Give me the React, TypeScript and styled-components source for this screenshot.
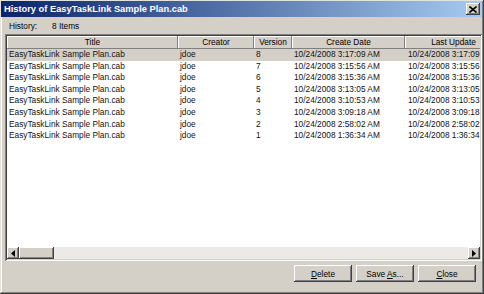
import React from "react";
import styled, { createGlobalStyle } from "styled-components";

type Revision = {
  version: number;
  created: string;
  updated: string;
};

const fileName = "EasyTaskLink Sample Plan.cab";

const revisions: Revision[] = [
  { version: 8, created: "10/24/2008 3:17:09 AM", updated: "10/24/2008 3:17:09 AM" },
  { version: 7, created: "10/24/2008 3:15:56 AM", updated: "10/24/2008 3:15:56 AM" },
  { version: 6, created: "10/24/2008 3:15:36 AM", updated: "10/24/2008 3:15:36 AM" },
  { version: 5, created: "10/24/2008 3:13:05 AM", updated: "10/24/2008 3:13:05 AM" },
  { version: 4, created: "10/24/2008 3:10:53 AM", updated: "10/24/2008 3:10:53 AM" },
  { version: 3, created: "10/24/2008 3:09:18 AM", updated: "10/24/2008 3:09:18 AM" },
  { version: 2, created: "10/24/2008 2:58:02 AM", updated: "10/24/2008 2:58:02 AM" },
  { version: 1, created: "10/24/2008 1:36:34 AM", updated: "10/24/2008 1:36:34 AM" }
];

const columns = ["Title", "Creator", "Version", "Create Date", "Last Update"];

// the last column runs past the visible area, like the real list view
const COLS = "171px 76px 38px 113px 97px 160px";

export default function App() {
  const [selected, setSelected] = React.useState(8);
  return (
    <>
      <GlobalStyle />
      <Window>
        <TitleBar>
          <TitleText>History of {fileName}</TitleText>
          <CloseBox aria-label="Close">
            <svg width="8" height="7" viewBox="0 0 8 7">
              <path d="M0.5 0.5 L7.5 6.5 M7.5 0.5 L0.5 6.5" stroke="#000" strokeWidth="1.6" />
            </svg>
          </CloseBox>
        </TitleBar>
        <Body>
          <InfoRow>
            <InfoLabel>History:</InfoLabel>
            <span>{revisions.length} Items</span>
          </InfoRow>
          <ListBox>
            <Viewport>
              <Grid>
                {columns.map((label) => (
                  <HeaderCell key={label}>{label}</HeaderCell>
                ))}
                <HeaderCell />
                {revisions.map((r) => (
                  <Row
                    key={r.version}
                    $selected={r.version === selected}
                    onClick={() => setSelected(r.version)}
                  >
                    <Cell>{fileName}</Cell>
                    <Cell>jdoe</Cell>
                    <Cell>{r.version}</Cell>
                    <Cell>{r.created}</Cell>
                    <Cell $pad={3}>{r.updated}</Cell>
                    <Cell />
                  </Row>
                ))}
              </Grid>
            </Viewport>
            <HScroll>
              <ArrowButton>
                <svg width="4" height="7" viewBox="0 0 4 7">
                  <path d="M4 0 L0 3.5 L4 7 Z" fill="#000" />
                </svg>
              </ArrowButton>
              <Thumb />
              <Track />
              <ArrowButton>
                <svg width="4" height="7" viewBox="0 0 4 7">
                  <path d="M0 0 L4 3.5 L0 7 Z" fill="#000" />
                </svg>
              </ArrowButton>
            </HScroll>
          </ListBox>
          <ButtonRow>
            <Button>
              <span>
                <u>D</u>elete
              </span>
            </Button>
            <Button>
              <span>
                Save <u>A</u>s...
              </span>
            </Button>
            <Button>
              <span>
                <u>C</u>lose
              </span>
            </Button>
          </ButtonRow>
        </Body>
      </Window>
    </>
  );
}

const GlobalStyle = createGlobalStyle`
  html, body {
    margin: 0;
    padding: 0;
    background: #d4d0c8;
  }
  body {
    font-family: "Liberation Sans", Arial, sans-serif;
    font-size: 8.3px;
    color: #000;
  }
`;

const Window = styled.div`
  width: 484px;
  height: 294px;
  box-sizing: border-box;
  padding: 1px 2px 2px 1px;
  background: #d4d0c8;
  box-shadow: inset -1px -1px #404040, inset 1px 1px #e4e2dc,
    inset -2px -2px #808080, inset 2px 2px #ffffff;
  display: flex;
  flex-direction: column;
`;

const TitleBar = styled.div`
  height: 16px;
  flex-shrink: 0;
  display: flex;
  align-items: center;
  justify-content: space-between;
  padding: 0 2px 0 3px;
  background: linear-gradient(to right, #0a246a, #a6caf0);
`;

const TitleText = styled.span`
  color: #fff;
  font-weight: bold;
  font-size: 9.3px;
  white-space: nowrap;
`;

const CloseBox = styled.div`
  width: 14px;
  height: 12px;
  box-sizing: border-box;
  display: flex;
  align-items: center;
  justify-content: center;
  background: #d4d0c8;
  box-shadow: inset -1px -1px #404040, inset 1px 1px #fff, inset -2px -2px #808080;
`;

const Body = styled.div`
  flex: 1;
  display: flex;
  flex-direction: column;
  padding-left: 4px;
`;

const InfoRow = styled.div`
  height: 17px;
  display: flex;
  align-items: center;
  padding: 1px 0 0 4px;
  box-sizing: border-box;
`;

const InfoLabel = styled.span`
  width: 43px;
`;

const ListBox = styled.div`
  height: 227px;
  box-sizing: border-box;
  padding: 2px;
  background: #fff;
  box-shadow: inset 1px 1px #808080, inset -1px -1px #fff, inset 2px 2px #404040,
    inset -2px -2px #d4d0c8;
  display: flex;
  flex-direction: column;
`;

const Viewport = styled.div`
  flex: 1;
  overflow: hidden;
`;

const Grid = styled.div`
  display: grid;
  grid-template-columns: ${COLS};
  width: max-content;
`;

const HeaderCell = styled.div`
  height: 13px;
  line-height: 13px;
  text-align: center;
  white-space: nowrap;
  background: #d4d0c8;
  box-shadow: inset -1px -1px #808080, inset 1px 1px #fff;
`;

const Row = styled.div<{ $selected?: boolean }>`
  display: contents;
  & > div {
    background: ${(p) => (p.$selected ? "#d4d0c8" : "#fff")};
  }
`;

const Cell = styled.div<{ $pad?: number }>`
  height: 11.6px;
  line-height: 11.6px;
  padding-left: ${(p) => p.$pad ?? 2}px;
  white-space: nowrap;
  color: #111;
`;

const HScroll = styled.div`
  height: 12px;
  display: flex;
  background: #eceae6;
`;

const raised = `
  background: #d4d0c8;
  box-shadow: inset -1px -1px #404040, inset 1px 1px #fff, inset -2px -2px #808080;
`;

const ArrowButton = styled.div`
  width: 12px;
  height: 12px;
  display: flex;
  align-items: center;
  justify-content: center;
  ${raised}
`;

const Thumb = styled.div`
  width: 35px;
  ${raised}
`;

const Track = styled.div`
  flex: 1;
`;

const ButtonRow = styled.div`
  display: flex;
  justify-content: flex-end;
  gap: 4px;
  padding: 4px 6px 0 0;
`;

const Button = styled.div`
  width: 58px;
  height: 17px;
  box-sizing: border-box;
  display: flex;
  align-items: center;
  justify-content: center;
  white-space: pre;
  ${raised}
`;
